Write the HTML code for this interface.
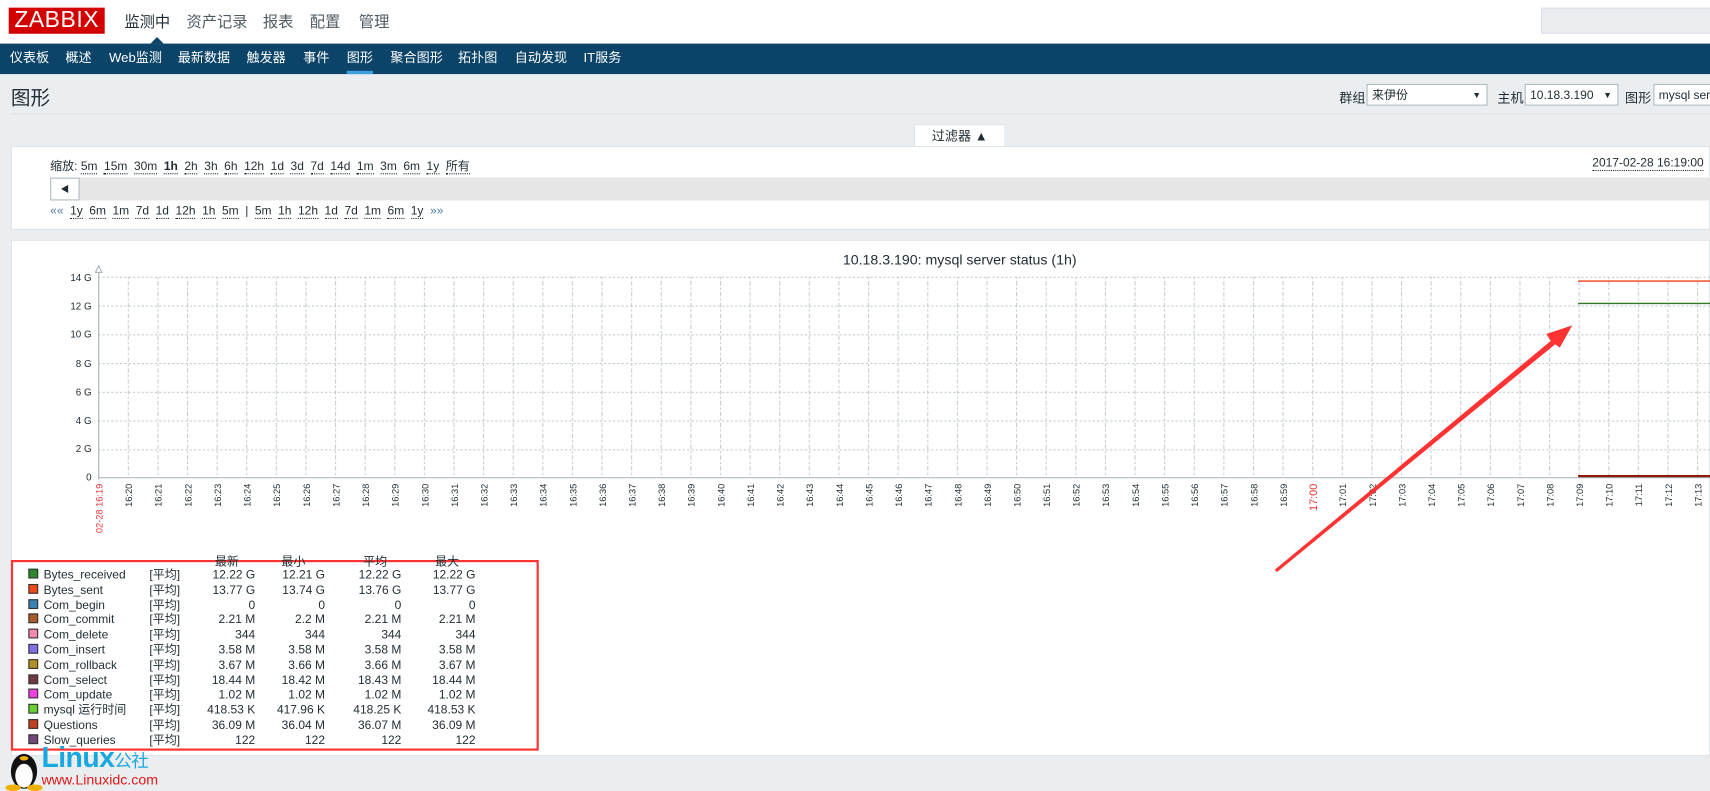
<!DOCTYPE html>
<html><head><meta charset="utf-8">
<style>
html,body{margin:0;padding:0;width:1710px;height:791px;overflow:hidden;background:#ebeef0;}
#w{position:absolute;left:0;top:0;width:1568px;height:726px;transform:scale(1.0906,1.0895);transform-origin:0 0;font-family:"Liberation Sans","Noto Sans CJK SC",sans-serif;color:#1f2c33;background:#ebeef0;overflow:hidden}
.a{position:absolute;white-space:nowrap}
.top{position:absolute;left:0;top:0;width:1568px;height:40px;background:#fff}
.nav{position:absolute;left:0;top:40px;width:1568px;height:28px;background:#0b4468}
.nav span{position:absolute;top:4px;color:#fff;font-size:12px}
.sel{position:absolute;height:20px;border:1px solid #acbbc2;background:#fff;font-size:11px;line-height:20px;padding-left:4px;box-sizing:border-box}
.lk{border-bottom:1px dotted #1f2c33;margin-right:6px}
.leg{position:absolute;font-size:11px;line-height:13.8px}
.sq{display:inline-block;width:9px;height:9px;border:1px solid #333;box-sizing:border-box}
</style></head><body><div id="w">
<div class="top"></div>
<div class="a" style="left:8px;top:7px;width:88px;height:24px;background:#d40000;color:#fff;font-size:21px;line-height:24px;text-align:center;letter-spacing:0.5px">ZABBIX</div>
<div class="a" style="left:114px;top:10px;font-size:14px;color:#1f2c33">监测中</div>
<div class="a" style="left:171px;top:10px;font-size:14px;color:#4f5b62">资产记录</div>
<div class="a" style="left:241px;top:10px;font-size:14px;color:#4f5b62">报表</div>
<div class="a" style="left:284px;top:10px;font-size:14px;color:#4f5b62">配置</div>
<div class="a" style="left:329px;top:10px;font-size:14px;color:#4f5b62">管理</div>
<div class="a" style="left:138px;top:34px;width:0;height:0;border-left:6px solid transparent;border-right:6px solid transparent;border-bottom:6px solid #0b4468"></div>
<div class="a" style="left:1413px;top:7px;width:160px;height:22px;background:#ebeef0;border:1px solid #dde"></div>
<div class="nav">
<span style="left:9px">仪表板</span><span style="left:60px">概述</span><span style="left:100px">Web监测</span><span style="left:163px">最新数据</span><span style="left:226px">触发器</span><span style="left:278px">事件</span><span style="left:318px">图形</span><span style="left:358px">聚合图形</span><span style="left:420px">拓扑图</span><span style="left:472px">自动发现</span><span style="left:535px">IT服务</span>
<div class="a" style="left:318px;top:25px;width:24px;height:3px;background:#3a9fdf"></div>
</div>
<div class="a" style="left:10px;top:76px;font-size:18px;color:#1f2c33">图形</div>
<div class="a" style="left:10px;top:104px;width:1558px;height:1px;background:#dfe4e7"></div>
<div class="a" style="left:1228px;top:81px;font-size:12px">群组</div>
<div class="sel" style="left:1253px;top:77px;width:111px">来伊份<span style="position:absolute;right:5px;font-size:8px">▼</span></div>
<div class="a" style="left:1373px;top:81px;font-size:12px">主机</div>
<div class="sel" style="left:1398px;top:77px;width:86px">10.18.3.190<span style="position:absolute;right:5px;font-size:8px">▼</span></div>
<div class="a" style="left:1490px;top:81px;font-size:12px">图形</div>
<div class="sel" style="left:1516px;top:77px;width:60px">mysql ser</div>
<div class="a" style="left:838px;top:114px;width:84px;height:21px;background:#fff;border:1px solid #dfe4e7;border-bottom:none;box-sizing:border-box;font-size:12px;text-align:center;line-height:21px">过滤器 ▲</div>
<div class="a" style="left:10px;top:134px;width:1558px;height:77px;background:#fff;border:1px solid #dfe4e7;box-sizing:border-box"></div>
<div class="a" style="left:46px;top:144px;font-size:11px">缩放: <span class="lk">5m</span><span class="lk">15m</span><span class="lk">30m</span><span class="lk" style="font-weight:bold">1h</span><span class="lk">2h</span><span class="lk">3h</span><span class="lk">6h</span><span class="lk">12h</span><span class="lk">1d</span><span class="lk">3d</span><span class="lk">7d</span><span class="lk">14d</span><span class="lk">1m</span><span class="lk">3m</span><span class="lk">6m</span><span class="lk">1y</span><span class="lk">所有</span></div>
<div class="a" style="left:1460px;top:144px;font-size:11px"><span style="border-bottom:1px dotted #1f2c33">2017-02-28 16:19:00</span></div>
<div class="a" style="left:46px;top:163px;width:1522px;height:21px;background:#e6e6e6"></div>
<div class="a" style="left:46px;top:163px;width:27px;height:21px;background:#fff;border:1px solid #acbbc2;box-sizing:border-box;font-size:8px;text-align:center;line-height:19px">◀</div>
<div class="a" style="left:46px;top:188px;font-size:11px"><span style="color:#4a7aa8;margin-right:6px">««</span><span class="lk">1y</span><span class="lk">6m</span><span class="lk">1m</span><span class="lk">7d</span><span class="lk">1d</span><span class="lk">12h</span><span class="lk">1h</span><span class="lk">5m</span><span style="margin-right:6px">|</span><span class="lk">5m</span><span class="lk">1h</span><span class="lk">12h</span><span class="lk">1d</span><span class="lk">7d</span><span class="lk">1m</span><span class="lk">6m</span><span class="lk">1y</span><span style="color:#4a7aa8">»»</span></div>
<div class="a" style="left:10px;top:220px;width:1558px;height:474px;background:#fff;border:1px solid #dfe4e7;box-sizing:border-box"></div>
<svg class="a" style="left:0;top:0" width="1568" height="726" font-family="Liberation Sans, DejaVu Sans, sans-serif">
<defs><pattern id="pv" x="90" y="0" width="27.15" height="10" patternUnits="userSpaceOnUse"><line x1="0.5" y1="0" x2="0.5" y2="10" stroke="#c5cdd2" stroke-width="1" stroke-dasharray="2,2"/></pattern></defs>
<text x="880" y="243" font-size="13" text-anchor="middle" fill="#1f2c33">10.18.3.190: mysql server status (1h)</text>
<rect x="91" y="254" width="1477" height="184" fill="url(#pv)"/>
<g stroke="#c5cdd2" stroke-dasharray="2,2"><line x1="90" y1="254.5" x2="1568" y2="254.5"/><line x1="90" y1="280.9" x2="1568" y2="280.9"/><line x1="90" y1="307.3" x2="1568" y2="307.3"/><line x1="90" y1="333.7" x2="1568" y2="333.7"/><line x1="90" y1="360.1" x2="1568" y2="360.1"/><line x1="90" y1="386.5" x2="1568" y2="386.5"/><line x1="90" y1="412.9" x2="1568" y2="412.9"/></g>
<line x1="90.5" y1="248" x2="90.5" y2="440" stroke="#a5b3ba"/>
<line x1="90" y1="438.5" x2="1568" y2="438.5" stroke="#a5b3ba"/>
<path d="M87.5 250 L90.5 244 L93.5 250 Z" fill="#fff" stroke="#a5b3ba"/>
<g font-size="9" fill="#1f2c33" text-anchor="end"><text x="84" y="258">14 G</text><text x="84" y="284">12 G</text><text x="84" y="310">10 G</text><text x="84" y="337">8 G</text><text x="84" y="363">6 G</text><text x="84" y="389">4 G</text><text x="84" y="415">2 G</text><text x="84" y="441">0</text></g>
<line x1="1447" y1="258" x2="1568" y2="258" stroke="#e8401e" stroke-width="1.2"/>
<line x1="1447" y1="278.5" x2="1568" y2="278.5" stroke="#2f7a1e" stroke-width="1.2"/>
<line x1="1447" y1="437" x2="1568" y2="437" stroke="#8b1a0a" stroke-width="2"/>
<g font-size="8.5" fill="#1f2c33" text-anchor="end">
<text transform="translate(94,444) rotate(-90)" fill="#e33">02-28 16:19</text>
<text transform="translate(121.2,444) rotate(-90)">16:20</text><text transform="translate(148.3,444) rotate(-90)">16:21</text><text transform="translate(175.5,444) rotate(-90)">16:22</text><text transform="translate(202.6,444) rotate(-90)">16:23</text><text transform="translate(229.8,444) rotate(-90)">16:24</text><text transform="translate(256.9,444) rotate(-90)">16:25</text><text transform="translate(284.1,444) rotate(-90)">16:26</text><text transform="translate(311.2,444) rotate(-90)">16:27</text><text transform="translate(338.4,444) rotate(-90)">16:28</text><text transform="translate(365.5,444) rotate(-90)">16:29</text><text transform="translate(392.7,444) rotate(-90)">16:30</text><text transform="translate(419.8,444) rotate(-90)">16:31</text><text transform="translate(447,444) rotate(-90)">16:32</text><text transform="translate(474.1,444) rotate(-90)">16:33</text><text transform="translate(501.3,444) rotate(-90)">16:34</text><text transform="translate(528.4,444) rotate(-90)">16:35</text><text transform="translate(555.6,444) rotate(-90)">16:36</text><text transform="translate(582.7,444) rotate(-90)">16:37</text><text transform="translate(609.9,444) rotate(-90)">16:38</text><text transform="translate(637,444) rotate(-90)">16:39</text><text transform="translate(664.2,444) rotate(-90)">16:40</text><text transform="translate(691.3,444) rotate(-90)">16:41</text><text transform="translate(718.5,444) rotate(-90)">16:42</text><text transform="translate(745.6,444) rotate(-90)">16:43</text><text transform="translate(772.8,444) rotate(-90)">16:44</text><text transform="translate(799.9,444) rotate(-90)">16:45</text><text transform="translate(827.1,444) rotate(-90)">16:46</text><text transform="translate(854.2,444) rotate(-90)">16:47</text><text transform="translate(881.4,444) rotate(-90)">16:48</text><text transform="translate(908.5,444) rotate(-90)">16:49</text><text transform="translate(935.7,444) rotate(-90)">16:50</text><text transform="translate(962.8,444) rotate(-90)">16:51</text><text transform="translate(990,444) rotate(-90)">16:52</text><text transform="translate(1017.1,444) rotate(-90)">16:53</text><text transform="translate(1044.3,444) rotate(-90)">16:54</text><text transform="translate(1071.4,444) rotate(-90)">16:55</text><text transform="translate(1098.6,444) rotate(-90)">16:56</text><text transform="translate(1125.7,444) rotate(-90)">16:57</text><text transform="translate(1152.9,444) rotate(-90)">16:58</text><text transform="translate(1180,444) rotate(-90)">16:59</text>
<text transform="translate(1207.7,444) rotate(-90)" fill="#e33" font-size="10">17:00</text>
<text transform="translate(1234.3,444) rotate(-90)">17:01</text><text transform="translate(1261.5,444) rotate(-90)">17:02</text><text transform="translate(1288.6,444) rotate(-90)">17:03</text><text transform="translate(1315.8,444) rotate(-90)">17:04</text><text transform="translate(1342.9,444) rotate(-90)">17:05</text><text transform="translate(1370.1,444) rotate(-90)">17:06</text><text transform="translate(1397.2,444) rotate(-90)">17:07</text><text transform="translate(1424.4,444) rotate(-90)">17:08</text><text transform="translate(1451.5,444) rotate(-90)">17:09</text><text transform="translate(1478.7,444) rotate(-90)">17:10</text><text transform="translate(1505.8,444) rotate(-90)">17:11</text><text transform="translate(1533,444) rotate(-90)">17:12</text><text transform="translate(1560.1,444) rotate(-90)">17:13</text>
</g>
<path d="M1170 523 L1423 313 L1419 307 L1440 300 L1430 318 L1426 315 L1171 524 Z" fill="#f33" stroke="#f33" stroke-width="1.5"/>
<rect x="11" y="515" width="482" height="173" fill="none" stroke="#f33" stroke-width="2"/>
</svg>
<div class="leg" style="left:197px;top:510px">最新</div><div class="leg" style="left:258px;top:510px">最小</div><div class="leg" style="left:333px;top:510px">平均</div><div class="leg" style="left:399px;top:510px">最大</div>
<div class="leg" style="left:26px;top:522px;width:420px">
<div style="position:relative;height:13.8px"><span class="sq" style="background:#2c8a2c"></span><span class="a" style="left:14px">Bytes_received</span><span class="a" style="left:111px">[平均]</span><span class="a" style="right:212px">12.22 G</span><span class="a" style="right:148px">12.21 G</span><span class="a" style="right:78px">12.22 G</span><span class="a" style="right:10px">12.22 G</span></div>
<div style="position:relative;height:13.8px"><span class="sq" style="background:#f04818"></span><span class="a" style="left:14px">Bytes_sent</span><span class="a" style="left:111px">[平均]</span><span class="a" style="right:212px">13.77 G</span><span class="a" style="right:148px">13.74 G</span><span class="a" style="right:78px">13.76 G</span><span class="a" style="right:10px">13.77 G</span></div>
<div style="position:relative;height:13.8px"><span class="sq" style="background:#3a80b0"></span><span class="a" style="left:14px">Com_begin</span><span class="a" style="left:111px">[平均]</span><span class="a" style="right:212px">0</span><span class="a" style="right:148px">0</span><span class="a" style="right:78px">0</span><span class="a" style="right:10px">0</span></div>
<div style="position:relative;height:13.8px"><span class="sq" style="background:#a85a28"></span><span class="a" style="left:14px">Com_commit</span><span class="a" style="left:111px">[平均]</span><span class="a" style="right:212px">2.21 M</span><span class="a" style="right:148px">2.2 M</span><span class="a" style="right:78px">2.21 M</span><span class="a" style="right:10px">2.21 M</span></div>
<div style="position:relative;height:13.8px"><span class="sq" style="background:#f088b0"></span><span class="a" style="left:14px">Com_delete</span><span class="a" style="left:111px">[平均]</span><span class="a" style="right:212px">344</span><span class="a" style="right:148px">344</span><span class="a" style="right:78px">344</span><span class="a" style="right:10px">344</span></div>
<div style="position:relative;height:13.8px"><span class="sq" style="background:#8070e0"></span><span class="a" style="left:14px">Com_insert</span><span class="a" style="left:111px">[平均]</span><span class="a" style="right:212px">3.58 M</span><span class="a" style="right:148px">3.58 M</span><span class="a" style="right:78px">3.58 M</span><span class="a" style="right:10px">3.58 M</span></div>
<div style="position:relative;height:13.8px"><span class="sq" style="background:#b09028"></span><span class="a" style="left:14px">Com_rollback</span><span class="a" style="left:111px">[平均]</span><span class="a" style="right:212px">3.67 M</span><span class="a" style="right:148px">3.66 M</span><span class="a" style="right:78px">3.66 M</span><span class="a" style="right:10px">3.67 M</span></div>
<div style="position:relative;height:13.8px"><span class="sq" style="background:#703840"></span><span class="a" style="left:14px">Com_select</span><span class="a" style="left:111px">[平均]</span><span class="a" style="right:212px">18.44 M</span><span class="a" style="right:148px">18.42 M</span><span class="a" style="right:78px">18.43 M</span><span class="a" style="right:10px">18.44 M</span></div>
<div style="position:relative;height:13.8px"><span class="sq" style="background:#f040e0"></span><span class="a" style="left:14px">Com_update</span><span class="a" style="left:111px">[平均]</span><span class="a" style="right:212px">1.02 M</span><span class="a" style="right:148px">1.02 M</span><span class="a" style="right:78px">1.02 M</span><span class="a" style="right:10px">1.02 M</span></div>
<div style="position:relative;height:13.8px"><span class="sq" style="background:#68d030"></span><span class="a" style="left:14px">mysql 运行时间</span><span class="a" style="left:111px">[平均]</span><span class="a" style="right:212px">418.53 K</span><span class="a" style="right:148px">417.96 K</span><span class="a" style="right:78px">418.25 K</span><span class="a" style="right:10px">418.53 K</span></div>
<div style="position:relative;height:13.8px"><span class="sq" style="background:#c04020"></span><span class="a" style="left:14px">Questions</span><span class="a" style="left:111px">[平均]</span><span class="a" style="right:212px">36.09 M</span><span class="a" style="right:148px">36.04 M</span><span class="a" style="right:78px">36.07 M</span><span class="a" style="right:10px">36.09 M</span></div>
<div style="position:relative;height:13.8px"><span class="sq" style="background:#704878"></span><span class="a" style="left:14px">Slow_queries</span><span class="a" style="left:111px">[平均]</span><span class="a" style="right:212px">122</span><span class="a" style="right:148px">122</span><span class="a" style="right:78px">122</span><span class="a" style="right:10px">122</span></div>
</div>
<svg class="a" style="left:4px;top:684px" width="36" height="42"><ellipse cx="18" cy="24" rx="12" ry="16" fill="#111"/><ellipse cx="18" cy="28" rx="8" ry="11" fill="#fff"/><ellipse cx="18" cy="12" rx="4" ry="2" fill="#f0b000"/><ellipse cx="8" cy="39" rx="7" ry="3" fill="#f0b000"/><ellipse cx="28" cy="39" rx="7" ry="3" fill="#f0b000"/></svg>
<div class="a" style="left:38px;top:681px;font-size:26px;font-weight:bold;color:#18a8e0;letter-spacing:-0.5px;line-height:28px">Linux<span style="font-size:16px;font-weight:normal">公社</span></div>
<div class="a" style="left:38px;top:708px;font-size:13px;color:#e01818">www.Linuxidc.com</div>
</div></body></html>
